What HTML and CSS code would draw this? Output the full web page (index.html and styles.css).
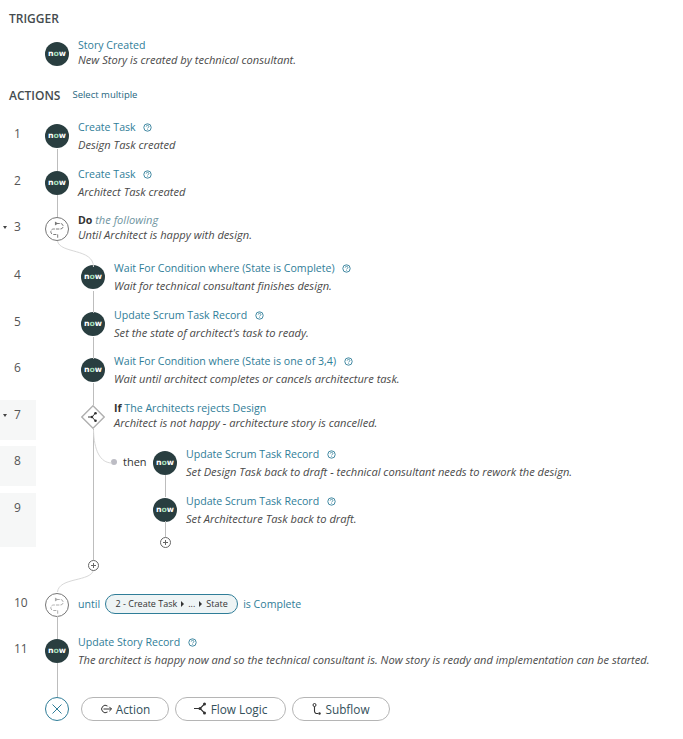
FILE: index.html
```html
<!DOCTYPE html>
<html lang="en">
<head>
    <meta charset="UTF-8">
    <title>Flow Designer</title>
    <link rel="stylesheet" href="styles.css">
</head>
<body>
    <svg class="hidden-defs" width="0" height="0">
        <symbol id="help" viewBox="0 0 9 9">
            <circle cx="4.5" cy="4.5" r="3.7" fill="none" stroke="#2f7d98" stroke-width="0.9"/>
            <path d="M3.2 3.6c0-1.7 2.7-1.7 2.7 0 0 .9-1.3 1-1.3 1.8M4.6 6.2v.7" fill="none" stroke="#2f7d98" stroke-width="0.8"/>
        </symbol>
        <symbol id="loop" viewBox="4 4 16 16">
            <path d="M11.5 8h3a2 2 0 0 1 0 4h-5a2 2 0 0 0 0 4h3v2.500" fill="none" stroke="currentColor" stroke-width="0.7" stroke-dasharray="2.500 0.800"/>
            <path d="M10.500 6.500l2.400 1.500-2.400 1.500z" fill="currentColor"/>
        </symbol>
    </svg>

    <!-- connectors between the nodes -->
    <svg class="wires" width="683" height="739" viewBox="0 0 683 739">
        <path d="M57.5 149V171M57.5 195V217M57.5 616V639M57.5 663V697M93.500 291V313M93.500 337V359M93.500 383V405M93.500 429V560M165.500 475V497M165.500 521V537"/>
        <path class="soft" d="M57.5 241C60 254 93.500 248 93.500 267M93.500 430C94 450 100 463 112 463M93.500 570C91 582 59 577 57.5 592"/>
    </svg>

    <h2 class="heading trigger-heading">TRIGGER</h2>
    <div class="row trigger-row">
        <div class="num"></div>
        <div class="node level1"><span class="now">n<i>o</i>w</span></div>
        <div class="text tight">
            <div class="title">Story Created</div>
            <div class="desc">New Story is created by technical consultant.</div>
        </div>
    </div>

    <div class="actions-head">
        <h2 class="heading">ACTIONS</h2>
        <a class="select-multiple">Select multiple</a>
    </div>

    <div class="row">
        <div class="num">1</div>
        <div class="node level1"><span class="now">n<i>o</i>w</span></div>
        <div class="text">
            <div class="title">Create Task <svg class="help"><use href="#help"/></svg></div>
            <div class="desc">Design Task created</div>
        </div>
    </div>
    <div class="row">
        <div class="num">2</div>
        <div class="node level1"><span class="now">n<i>o</i>w</span></div>
        <div class="text">
            <div class="title">Create Task <svg class="help"><use href="#help"/></svg></div>
            <div class="desc">Architect Task created</div>
        </div>
    </div>
    <div class="row block-end">
        <div class="num"><span class="caret"></span>3</div>
        <div class="node level1"><span class="ring"><svg class="ring-icon"><use href="#loop"/></svg></span></div>
        <div class="text tight">
            <div class="title"><b>Do</b> <em>the following</em></div>
            <div class="desc">Until Architect is happy with design.</div>
        </div>
    </div>

    <div class="row">
        <div class="num">4</div>
        <div class="node level2"><span class="now">n<i>o</i>w</span></div>
        <div class="text">
            <div class="title">Wait For Condition where (State is Complete) <svg class="help"><use href="#help"/></svg></div>
            <div class="desc">Wait for technical consultant finishes design.</div>
        </div>
    </div>
    <div class="row">
        <div class="num">5</div>
        <div class="node level2"><span class="now">n<i>o</i>w</span></div>
        <div class="text">
            <div class="title">Update Scrum Task Record <svg class="help"><use href="#help"/></svg></div>
            <div class="desc">Set the state of architect's task to ready.</div>
        </div>
    </div>
    <div class="row">
        <div class="num">6</div>
        <div class="node level2"><span class="now">n<i>o</i>w</span></div>
        <div class="text">
            <div class="title">Wait For Condition where (State is one of 3,4) <svg class="help"><use href="#help"/></svg></div>
            <div class="desc">Wait until architect completes or cancels architecture task.</div>
        </div>
    </div>
    <div class="row">
        <div class="num shaded"><span class="caret"></span>7</div>
        <div class="node level2">
            <svg class="diamond" viewBox="0 0 24 24">
                <path d="M12 .8L23.2 12 12 23.2.8 12z" fill="#fff" stroke="#b0b0b0" stroke-width="1.400"/>
                <path d="M7 12h4M14.500 8L11 12l3.500 4" fill="none" stroke="#333" stroke-width="1"/>
                <circle cx="14.500" cy="8.200" r="1.300" fill="#333"/>
                <circle cx="14.500" cy="15.800" r="1.300" fill="#333"/>
                <circle cx="11" cy="12" r="1.300" fill="#333"/>
            </svg>
        </div>
        <div class="text tight">
            <div class="title"><b>If</b> The Architects rejects Design</div>
            <div class="desc">Architect is not happy - architecture story is cancelled.</div>
        </div>
    </div>
    <div class="row">
        <div class="num shaded">8</div>
        <div class="then"><span class="dot"></span>then</div>
        <div class="node"><span class="now">n<i>o</i>w</span></div>
        <div class="text">
            <div class="title">Update Scrum Task Record <svg class="help"><use href="#help"/></svg></div>
            <div class="desc">Set Design Task back to draft - technical consultant needs to rework the design.</div>
        </div>
    </div>
    <div class="row row-tall">
        <div class="num shaded">9</div>
        <div class="node level3"><span class="now">n<i>o</i>w</span></div>
        <div class="text">
            <div class="title">Update Scrum Task Record <svg class="help"><use href="#help"/></svg></div>
            <div class="desc">Set Architecture Task back to draft.</div>
        </div>
    </div>

    <span class="plus plus-inner"></span>
    <span class="plus plus-outer"></span>

    <div class="row until-row">
        <div class="num">10</div>
        <div class="node level1"><span class="ring ring-light"><svg class="ring-icon"><use href="#loop"/></svg></span></div>
        <div class="until">
            <span>until</span>
            <span class="pill">2 - Create Task <span class="arrow"></span> ... <span class="arrow"></span> State</span>
            <span>is Complete</span>
        </div>
    </div>
    <div class="row">
        <div class="num">11</div>
        <div class="node level1"><span class="now">n<i>o</i>w</span></div>
        <div class="text">
            <div class="title">Update Story Record <svg class="help"><use href="#help"/></svg></div>
            <div class="desc">The architect is happy now and so the technical consultant is. Now story is ready and implementation can be started.</div>
        </div>
    </div>

    <div class="toolbar">
        <span class="close">
            <svg width="12" height="12" viewBox="0 0 12 12"><path d="M1.5 1.5l9 9M10.5 1.5l-9 9" stroke="#2f7d98" stroke-width="1" fill="none"/></svg>
        </span>
        <button class="btn btn-action">
            <svg width="12" height="10" viewBox="0 0 12 10"><path d="M7.500 2A3.700 3.700 0 1 0 7.500 8M3.500 5H11.500M9.300 2.800L11.500 5 9.300 7.200" fill="none" stroke="#333" stroke-width="1"/></svg>
            Action
        </button>
        <button class="btn btn-logic">
            <svg width="13" height="13" viewBox="0 0 13 13"><path d="M0 6.500h6M10.500 2L6 6.500l4.500 4.500" fill="none" stroke="#333" stroke-width="1.100"/><circle cx="6" cy="6.500" r="1.500" fill="#333"/><circle cx="10.500" cy="2" r="1.500" fill="#333"/><circle cx="10.500" cy="11" r="1.500" fill="#333"/></svg>
            Flow Logic
        </button>
        <button class="btn btn-sub">
            <svg width="9" height="12" viewBox="0 0 9 12"><circle cx="2.500" cy="2" r="1.500" fill="none" stroke="#333" stroke-width="1"/><path d="M2.500 3.500v4.500a2.500 2.500 0 0 0 2.500 2.500h1" fill="none" stroke="#333" stroke-width="1.100"/><circle cx="7.500" cy="10.500" r="1.200" fill="#333"/></svg>
            Subflow
        </button>
    </div>
</body>
</html>
```

FILE: styles.css
```css
body {
    margin: 0;
    position: relative;
    font-family: "Open Sans", sans-serif;
    font-size: 11px;
    line-height: 16px;
    color: #333;
    background: #fff;
}

.hidden-defs {
    position: absolute;
}

.wires {
    position: absolute;
    top: 0;
    left: 0;
    fill: none;
    stroke: #bdbdbd;
    stroke-width: 1;
}

.wires .soft {
    stroke: #d8d8d8;
}

.heading {
    margin: 0;
    font-size: 12px;
    font-weight: 600;
    line-height: 16px;
    color: #454c4f;
}

.trigger-heading {
    padding: 11px 0 0 9px;
}

.actions-head {
    display: flex;
    align-items: flex-start;
    gap: 12px;
    padding-left: 9px;
    margin: 11px 0 15px;
}

.select-multiple {
    font-size: 9.5px;
    line-height: 13px;
    color: #1f6680;
}

.row {
    display: flex;
    height: 40px;
    margin-bottom: 6.5px;
    white-space: nowrap;
}

.trigger-row {
    margin: 10px 0 0;
}

.block-end {
    margin-bottom: 8px;
}

.row-tall {
    height: 54px;
    margin-bottom: 41px;
}

.num {
    position: relative;
    box-sizing: border-box;
    flex: none;
    width: 36px;
    padding: 7px 0 0 14px;
    font-size: 12px;
    color: #555;
}

.shaded {
    background: #f6f7f7;
}

.caret {
    position: absolute;
    left: 3px;
    top: 14px;
    border-left: 2.5px solid transparent;
    border-right: 2.5px solid transparent;
    border-top: 3px solid #444;
}

.node {
    flex: none;
    width: 24px;
    height: 24px;
    margin: 5px 9px 0 0;
}

.level1 {
    margin-left: 9px;
}

.level2 {
    margin-left: 45px;
}

.level3 {
    margin-left: 117px;
}

.now {
    display: block;
    width: 24px;
    height: 24px;
    border-radius: 50%;
    background: #293e40;
    color: #fff;
    font-family: "DejaVu Sans", sans-serif;
    font-size: 7.8px;
    font-weight: 700;
    line-height: 24px;
    text-align: center;
}

.now i {
    font-style: normal;
    color: #9fd9b5;
}

.ring {
    display: block;
    box-sizing: border-box;
    width: 24px;
    height: 24px;
    border: 1px solid #777;
    border-radius: 50%;
    background: #fff;
    color: #777;
}

.ring-light {
    color: #aaa;
}

.ring-icon {
    display: block;
    width: 22px;
    height: 22px;
}

.diamond {
    display: block;
    width: 24px;
    height: 24px;
}

.text {
    flex: none;
}

.title {
    font-size: 10.6px;
    color: #2f7d98;
}

.title b {
    font-weight: 700;
    color: #333;
}

.title em {
    font-size: 11.12px;
    color: #6f959f;
}

.desc {
    margin-top: 2px;
    font-size: 11.12px;
    font-style: italic;
    color: #4a4a4a;
}

.tight .desc {
    margin-top: -1px;
}

.help {
    width: 9px;
    height: 9px;
    margin-left: 5px;
    vertical-align: -1px;
}

.then {
    box-sizing: border-box;
    display: flex;
    flex: none;
    align-items: center;
    width: 117px;
    height: 32px;
    padding-left: 75px;
    color: #333;
}

.dot {
    width: 6px;
    height: 6px;
    margin-right: 6px;
    border-radius: 50%;
    background: #bcbcc4;
}

.plus {
    position: absolute;
    box-sizing: border-box;
    width: 11px;
    height: 11px;
    border: 1px solid #666;
    border-radius: 50%;
    background:
        linear-gradient(#666, #666) center / 5px 1px no-repeat,
        linear-gradient(#666, #666) center / 1px 5px no-repeat,
        #fff;
}

.plus-inner {
    left: 160px;
    top: 537px;
}

.plus-outer {
    left: 88px;
    top: 560px;
}

.until {
    display: flex;
    align-items: center;
    gap: 5px;
    height: 33px;
    font-size: 10.6px;
    color: #2f7d98;
}

.pill {
    display: flex;
    align-items: center;
    justify-content: center;
    gap: 4px;
    box-sizing: border-box;
    width: 133px;
    height: 20px;
    border: 1.5px solid #2f7d98;
    border-radius: 10px;
    background: #eef4f5;
    color: #333;
    font-size: 9px;
}

.arrow {
    border-top: 3px solid transparent;
    border-bottom: 3px solid transparent;
    border-left: 3px solid #333;
}

.toolbar {
    display: flex;
    align-items: center;
    gap: 6px;
    padding-left: 45px;
    margin-top: 23px;
}

.close {
    box-sizing: border-box;
    display: flex;
    align-items: center;
    justify-content: center;
    width: 24px;
    height: 24px;
    margin-right: 6px;
    border: 1px solid #2f7d98;
    border-radius: 50%;
}

.btn {
    display: flex;
    align-items: center;
    justify-content: center;
    gap: 4px;
    box-sizing: border-box;
    height: 24px;
    padding: 0 0 1px;
    border: 1px solid #b5b5b5;
    border-radius: 12px;
    background: #fff;
    color: #33505a;
    font-family: inherit;
    font-size: 11.8px;
}

.btn-action {
    width: 88px;
}

.btn-logic {
    width: 111px;
}

.btn-sub {
    width: 98px;
}
```
